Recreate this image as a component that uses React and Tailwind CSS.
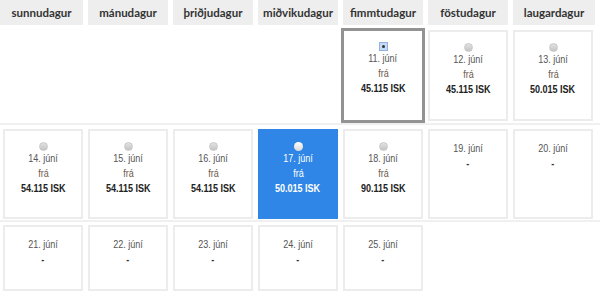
import React from 'react'

const days = ["sunnudagur", "mánudagur", "þriðjudagur", "miðvikudagur", "fimmtudagur", "föstudagur", "laugardagur"]

const rows = [
  [null, null, null, null,
    { date: "11. júní", price: "45.115 ISK", checked: true },
    { date: "12. júní", price: "45.115 ISK" },
    { date: "13. júní", price: "50.015 ISK" }],
  [{ date: "14. júní", price: "54.115 ISK" },
    { date: "15. júní", price: "54.115 ISK" },
    { date: "16. júní", price: "54.115 ISK" },
    { date: "17. júní", price: "50.015 ISK", active: true },
    { date: "18. júní", price: "90.115 ISK" },
    { date: "19. júní" },
    { date: "20. júní" }],
  [{ date: "21. júní" }, { date: "22. júní" }, { date: "23. júní" }, { date: "24. júní" }, { date: "25. júní" }, null, null],
]

const narrow = { fontFamily: '"Liberation Sans", Arial, sans-serif' }

const Radio = ({ checked, active }) => {
  if (checked) {
    return (
      <span className="w-[9px] h-[9px] bg-[#c6d9f5] border border-[#8fb1e3] flex items-center justify-center">
        <span className="w-[3px] h-[3px] rounded-full bg-[#333]" />
      </span>
    )
  }
  return (
    <span className={active
      ? "w-[9px] h-[9px] rounded-full bg-gradient-to-b from-white to-[#d9d9d9]"
      : "w-[9px] h-[9px] rounded-full bg-gradient-to-b from-[#e2e2e2] to-[#c4c4c4] border border-[#c8c8c8]"} />
  )
}

// the site's font is a narrow face; squeeze Liberation Sans to match
const Line = ({ className, children }) => (
  <div className={"h-[15px] leading-[15px] text-[11px] " + className}>
    <span className="inline-block scale-x-[0.82]">{children}</span>
  </div>
)

const Cell = ({ item, height }) => {
  if (!item) return <div style={{ height }} />
  const priced = !!item.price
  let cls = "flex flex-col items-center pt-[10px] border-2 border-[#ececec] bg-white"
  if (item.active) cls = "flex flex-col items-center pt-[10px] border-2 border-[#2f86e6] bg-[#2f86e6]"
  if (item.checked) cls = "flex flex-col items-center pt-[10px] border-[3px] border-[#939393] bg-white -m-[2px]"
  return (
    <div className={cls} style={{ ...narrow, height: item.checked ? height + 4 : height }}>
      {priced && (
        <div className="h-[10px] flex items-center justify-center">
          <Radio checked={item.checked} active={item.active} />
        </div>
      )}
      <Line className={item.active ? "text-white" : "text-[#555]"}>{item.date}</Line>
      {priced ? (
        <>
          <Line className={item.active ? "text-white" : "text-[#6b5a4c]"}>frá</Line>
          <Line className={item.active ? "font-bold text-white" : "font-bold text-[#222]"}>{item.price}</Line>
        </>
      ) : (
        <Line className="font-bold text-[#333]">-</Line>
      )}
    </div>
  )
}

const App = () => {
  return (
    <div className="w-[600px] h-[300px] bg-white overflow-hidden">
      <div className="grid grid-cols-[83px_80px_80px_80px_80px_80px_82px] gap-x-[5px] h-[25px] bg-white">
        {days.map((d) => (
          <div key={d} className="bg-[#eeeeee] flex items-center justify-center text-[11.5px] font-bold text-[#333]"
            style={{ fontFamily: 'Lato, "Open Sans", sans-serif' }}>
            {d}
          </div>
        ))}
      </div>
      <div className="px-[3px] pt-[5px] pb-[2px] border-b-2 border-[#f0f0f0]">
        <div className="grid grid-cols-7 gap-x-[5px] w-[590px]">
          {rows[0].map((it, i) => <Cell key={i} item={it} height={91} />)}
        </div>
      </div>
      <div className="px-[3px] pt-[4px] pb-[1px] border-b-2 border-[#f0f0f0]">
        <div className="grid grid-cols-7 gap-x-[5px] w-[590px]">
          {rows[1].map((it, i) => <Cell key={i} item={it} height={90} />)}
        </div>
      </div>
      <div className="px-[3px] pt-[3px]">
        <div className="grid grid-cols-7 gap-x-[5px] w-[590px]">
          {rows[2].map((it, i) => <Cell key={i} item={it} height={66} />)}
        </div>
      </div>
    </div>
  )
}

export default App
